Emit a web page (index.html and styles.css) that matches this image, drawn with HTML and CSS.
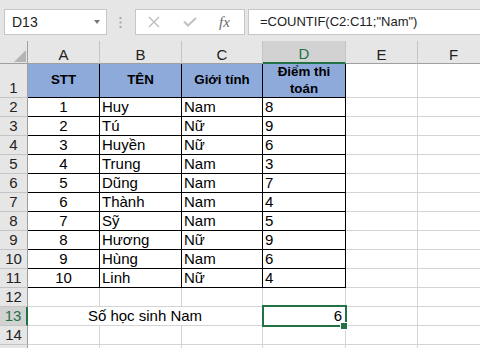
FILE: index.html
```html
<!DOCTYPE html>
<html lang="vi">
<head>
    <meta charset="UTF-8">
    <title>Sheet1</title>
    <link rel="stylesheet" href="styles.css">
</head>
<body>

<div class="app">
    <!-- formula bar -->
    <div class="fbar">
        <div class="namebox"><span>D13</span><i class="caret"></i></div>
        <svg class="grip" width="3" height="12" viewBox="0 0 3 12">
            <rect x="0.5" y="0" width="2" height="2" fill="#a8a8a8"/>
            <rect x="0.5" y="4.5" width="2" height="2" fill="#a8a8a8"/>
            <rect x="0.5" y="9" width="2" height="2" fill="#a8a8a8"/>
        </svg>
        <div class="fbtns">
            <svg class="btn-x" width="12" height="12" viewBox="0 0 12 12">
                <path d="M1 1 L11 11 M11 1 L1 11" stroke="#bdbdbd" stroke-width="1.4" fill="none"/>
            </svg>
            <svg class="btn-ok" width="14" height="10" viewBox="0 0 14 10">
                <path d="M1 4.5 L5 8.5 L13 1" stroke="#c2c2c2" stroke-width="2" fill="none"/>
            </svg>
            <span class="fx">fx</span>
        </div>
        <div class="finput">=COUNTIF(C2:C11;"Nam")</div>
    </div>

    <!-- grid -->
    <div class="sheet">
        <div class="ch corner"><i class="tri"></i></div>
        <div class="ch">A</div>
        <div class="ch">B</div>
        <div class="ch">C</div>
        <div class="ch on">D</div>
        <div class="ch">E</div>
        <div class="ch">F</div>

        <div class="rh">1</div>
        <div class="c t th">STT</div>
        <div class="c t th">TÊN</div>
        <div class="c t th">Giới tính</div>
        <div class="c t th">Điểm thi<br>toán</div>
        <div class="c"></div>
        <div class="c"></div>

        <div class="rh">2</div>
        <div class="c t ctr">1</div>
        <div class="c t">Huy</div>
        <div class="c t">Nam</div>
        <div class="c t">8</div>
        <div class="c"></div>
        <div class="c"></div>

        <div class="rh">3</div>
        <div class="c t ctr">2</div>
        <div class="c t">Tú</div>
        <div class="c t">Nữ</div>
        <div class="c t">9</div>
        <div class="c"></div>
        <div class="c"></div>

        <div class="rh">4</div>
        <div class="c t ctr">3</div>
        <div class="c t">Huyền</div>
        <div class="c t">Nữ</div>
        <div class="c t">6</div>
        <div class="c"></div>
        <div class="c"></div>

        <div class="rh">5</div>
        <div class="c t ctr">4</div>
        <div class="c t">Trung</div>
        <div class="c t">Nam</div>
        <div class="c t">3</div>
        <div class="c"></div>
        <div class="c"></div>

        <div class="rh">6</div>
        <div class="c t ctr">5</div>
        <div class="c t">Dũng</div>
        <div class="c t">Nam</div>
        <div class="c t">7</div>
        <div class="c"></div>
        <div class="c"></div>

        <div class="rh">7</div>
        <div class="c t ctr">6</div>
        <div class="c t">Thành</div>
        <div class="c t">Nam</div>
        <div class="c t">4</div>
        <div class="c"></div>
        <div class="c"></div>

        <div class="rh">8</div>
        <div class="c t ctr">7</div>
        <div class="c t">Sỹ</div>
        <div class="c t">Nam</div>
        <div class="c t">5</div>
        <div class="c"></div>
        <div class="c"></div>

        <div class="rh">9</div>
        <div class="c t ctr">8</div>
        <div class="c t">Hương</div>
        <div class="c t">Nữ</div>
        <div class="c t">9</div>
        <div class="c"></div>
        <div class="c"></div>

        <div class="rh">10</div>
        <div class="c t ctr">9</div>
        <div class="c t">Hùng</div>
        <div class="c t">Nam</div>
        <div class="c t">6</div>
        <div class="c"></div>
        <div class="c"></div>

        <div class="rh">11</div>
        <div class="c t ctr">10</div>
        <div class="c t">Linh</div>
        <div class="c t">Nữ</div>
        <div class="c t">4</div>
        <div class="c"></div>
        <div class="c"></div>

        <div class="rh">12</div>
        <div class="c"></div>
        <div class="c"></div>
        <div class="c"></div>
        <div class="c"></div>
        <div class="c"></div>
        <div class="c"></div>

        <div class="rh on">13</div>
        <div class="c ctr merged">Số học sinh Nam</div>
        <div class="c rt sel">6</div>
        <div class="c"></div>
        <div class="c"></div>

        <div class="rh">14</div>
        <div class="c"></div>
        <div class="c"></div>
        <div class="c"></div>
        <div class="c"></div>
        <div class="c"></div>
        <div class="c"></div>

        <!-- row 15, only its top edge is in view -->
        <div class="rh"></div>
        <div class="c"></div>
        <div class="c"></div>
        <div class="c"></div>
        <div class="c"></div>
        <div class="c"></div>
        <div class="c"></div>
    </div>
</div>

</body>
</html>
```

FILE: styles.css
```css
body {
    margin: 0;
    background: #fff;
    font-family: "Liberation Sans", Arial, sans-serif;
    color: #222;
}
.app {
    width: 480px;
    height: 348px;
    overflow: hidden;
    background: #e6e6e6;
}

/* formula bar */
.fbar {
    display: flex;
    align-items: flex-start;
    height: 41px;
    padding: 9px 0 0 4px;
    box-sizing: border-box;
}
.namebox {
    width: 103px;
    height: 26px;
    box-sizing: border-box;
    border: 1px solid #c6c6c6;
    background: #fff;
    display: flex;
    align-items: center;
    justify-content: space-between;
    padding: 0 6px 0 7px;
    font-size: 14px;
}
.caret {
    width: 0;
    height: 0;
    border-left: 3.5px solid transparent;
    border-right: 3.5px solid transparent;
    border-top: 4px solid #777;
}
.grip {
    margin: 8px 13px 0 12px;
}
.fbtns {
    width: 110px;
    height: 26px;
    box-sizing: border-box;
    border: 1px solid #c6c6c6;
    background: #fff;
    display: flex;
    align-items: center;
    padding-left: 12px;
}
.btn-ok {
    margin-left: 23px;
}
.fx {
    margin-left: 22px;
    font-family: "Liberation Serif", serif;
    font-style: italic;
    font-size: 15px;
    color: #6b6b6b;
}
.finput {
    flex: 1;
    height: 26px;
    box-sizing: border-box;
    margin: 0 -10px 0 3px;
    border: 1px solid #c6c6c6;
    background: #fff;
    padding-left: 11px;
    font-size: 13px;
    line-height: 24px;
}

/* sheet */
.sheet {
    display: grid;
    grid-template-columns: 28px 72px 82px 81px 83px 72px 72px;
    grid-template-rows: 23px 34px repeat(15, 19px);
    background: #fff;
}
.sheet > div {
    box-sizing: border-box;
}
.ch {
    background: #e6e6e6;
    border-right: 1px solid #c4c4c4;
    border-bottom: 1px solid #9f9f9f;
    display: flex;
    align-items: flex-end;
    justify-content: center;
    font-size: 15px;
    line-height: 16px;
}
.ch.on {
    background: #d2d2d2;
    color: #217346;
    border-bottom: 2px solid #217346;
}
.corner {
    justify-content: flex-end;
    padding: 0 1px 1px 0;
    border-right-color: #9f9f9f;
}
.tri {
    width: 0;
    height: 0;
    border-left: 12px solid transparent;
    border-bottom: 12px solid #b4b4b4;
}
.rh {
    background: #e6e6e6;
    border-right: 1px solid #9f9f9f;
    border-bottom: 1px solid #c4c4c4;
    display: flex;
    align-items: flex-end;
    justify-content: center;
    font-size: 15px;
    line-height: 18px;
}
.rh.on {
    background: #d2d2d2;
    color: #217346;
    border-right: 2px solid #217346;
}
.c {
    border-right: 1px solid #d4d4d4;
    border-bottom: 1px solid #d4d4d4;
    display: flex;
    align-items: flex-end;
    padding: 0 2px;
    font-size: 15px;
    line-height: 18px;
    white-space: nowrap;
    color: #000;
}
.c.t {
    border-color: #000;
}
.th {
    background: #8eaadb;
    font-weight: bold;
    font-size: 13.33px;
    line-height: 16.7px;
    align-items: center;
    justify-content: center;
    text-align: center;
    white-space: normal;
}
.ctr {
    justify-content: center;
}
.rt {
    justify-content: flex-end;
    padding-right: 3px;
}
.merged {
    grid-column: span 3;
}

/* active cell */
.sel {
    position: relative;
}
.sel::before {
    content: "";
    position: absolute;
    left: -1px;
    top: -2px;
    width: 85px;
    height: 22px;
    box-sizing: border-box;
    border: 2px solid #217346;
}
.sel::after {
    content: "";
    position: absolute;
    left: 78px;
    top: 16px;
    width: 6px;
    height: 6px;
    background: #217346;
    box-shadow: 0 0 0 1px #fff;
}
```
